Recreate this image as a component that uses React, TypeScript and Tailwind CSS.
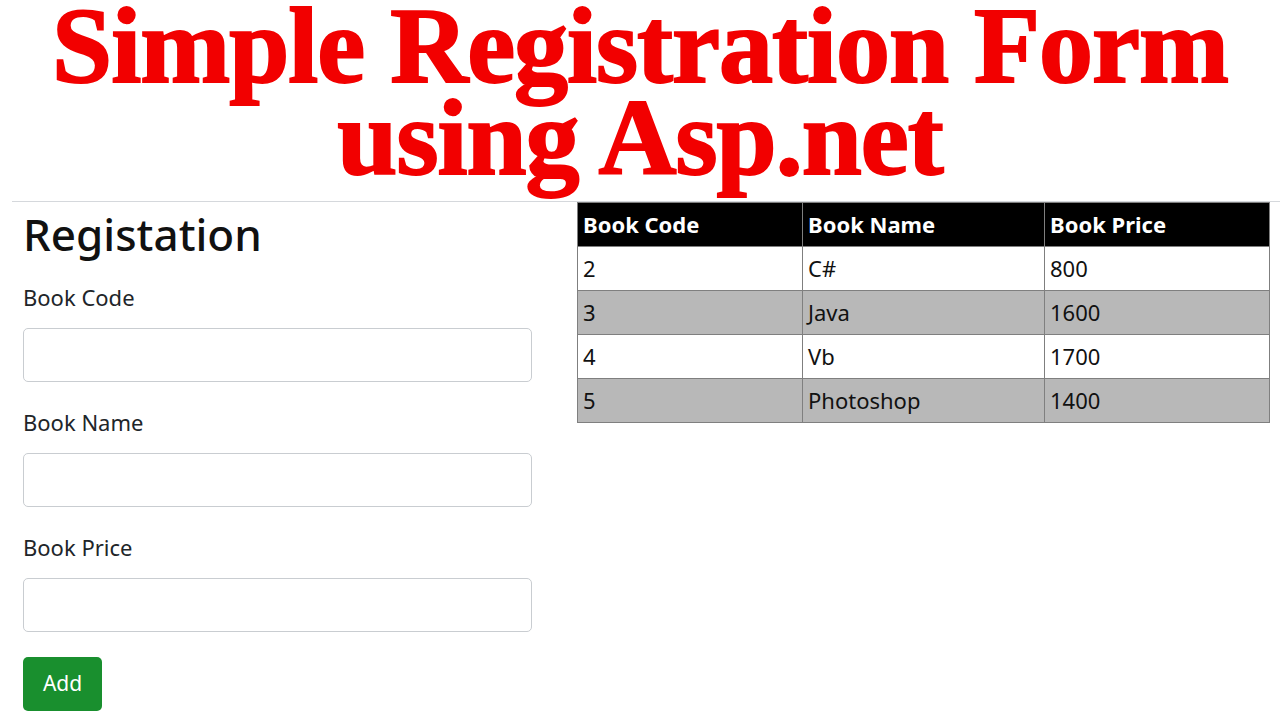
const books = [
  { code: "2", name: "C#", price: "800" },
  { code: "3", name: "Java", price: "1600" },
  { code: "4", name: "Vb", price: "1700" },
  { code: "5", name: "Photoshop", price: "1400" },
];

function Field({ label }: { label: string }) {
  return (
    <div className="mb-[25px] flex flex-col">
      <label className="mb-[16px] h-[30px] text-[22px] leading-[30px] text-[#212529]">{label}</label>
      <input className="h-[54px] w-[509px] rounded-[5px] border border-[#c9cdd1] bg-white" />
    </div>
  );
}

export default function App() {
  return (
    <div className="h-[720px] w-[1280px] overflow-hidden bg-white font-['Noto_Sans',sans-serif]">
      {/* Banner title */}
      <h1 className="flex h-[201px] flex-col items-center font-['Liberation_Serif',serif] text-[108px] font-bold leading-[92px] tracking-[-1px] text-[#f20000] [-webkit-text-stroke:2px_#f20000]">
        <span className="whitespace-nowrap">Simple Registration Form</span>
        <span className="whitespace-nowrap">using Asp.net</span>
      </h1>

      <div className="ml-[12px] flex border-t border-[#d5d8dc] pl-[11px]">
        {/* Form */}
        <div className="w-[554px]">
          <h2 className="mb-[22px] mt-[6px] text-[44px] font-medium leading-[52px] text-[#111]">Registation</h2>
          <Field label="Book Code" />
          <Field label="Book Name" />
          <Field label="Book Price" />
          <button className="h-[54px] w-[79px] rounded-[5px] bg-[#198f2e] text-[21px] text-white">Add</button>
        </div>

        {/* Table */}
        <table className="h-fit w-[693px] border-collapse border border-[#7f7f7f] text-[22px] text-[#111]">
          <thead>
            <tr className="h-[44px] bg-black text-left text-white">
              <th className="w-[225px] border border-[#7f7f7f] px-[5px] font-bold">Book Code</th>
              <th className="w-[242px] border border-[#7f7f7f] px-[5px] font-bold">Book Name</th>
              <th className="border border-[#7f7f7f] px-[5px] font-bold">Book Price</th>
            </tr>
          </thead>
          <tbody>
            {books.map((b, i) => (
              <tr key={b.code} className={i % 2 === 0 ? "h-[44px] bg-white" : "h-[44px] bg-[#b8b8b8]"}>
                <td className="border border-[#7f7f7f] px-[5px]">{b.code}</td>
                <td className="border border-[#7f7f7f] px-[5px]">{b.name}</td>
                <td className="border border-[#7f7f7f] px-[5px]">{b.price}</td>
              </tr>
            ))}
          </tbody>
        </table>
      </div>
    </div>
  );
}
